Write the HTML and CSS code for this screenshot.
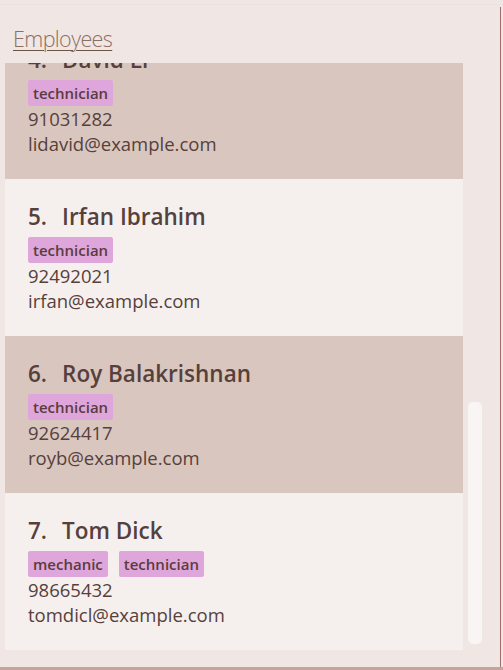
FILE: index.html
```html
<!DOCTYPE html>
<html>
<head>
<meta charset="utf-8">
<link rel="stylesheet" href="styles.css">
</head>
<body>
<div class="window">
  <div class="topstrip"></div>
  <div class="panel">
    <h1 class="title">Employees</h1>
    <div class="listarea">
      <div class="viewport">
        <ul class="list">
          <li class="card alt">
            <div class="name"><span class="num">4.</span><span>David Li</span></div>
            <div class="tags"><span class="tag">technician</span></div>
            <div class="line">91031282</div>
            <div class="line">lidavid@example.com</div>
          </li>
          <li class="card">
            <div class="name"><span class="num">5.</span><span>Irfan Ibrahim</span></div>
            <div class="tags"><span class="tag">technician</span></div>
            <div class="line">92492021</div>
            <div class="line">irfan@example.com</div>
          </li>
          <li class="card alt">
            <div class="name"><span class="num">6.</span><span>Roy Balakrishnan</span></div>
            <div class="tags"><span class="tag">technician</span></div>
            <div class="line">92624417</div>
            <div class="line">royb@example.com</div>
          </li>
          <li class="card">
            <div class="name"><span class="num">7.</span><span>Tom Dick</span></div>
            <div class="tags"><span class="tag">mechanic</span><span class="tag">technician</span></div>
            <div class="line">98665432</div>
            <div class="line">tomdicl@example.com</div>
          </li>
        </ul>
      </div>
      <div class="track"><div class="thumb"></div></div>
    </div>
  </div>
</div>
</body>
</html>
```

FILE: styles.css
```css
* { box-sizing: border-box; }
html, body { margin: 0; padding: 0; }
body {
  width: 503px;
  height: 670px;
  background: #f0e6e4;
  font-family: "Open Sans", "Noto Sans", sans-serif;
  color: #57403c;
  overflow: hidden;
}
.window {
  width: 503px;
  height: 670px;
  display: flex;
  flex-direction: column;
  border-bottom: 3px solid #c8a39d;
}
.topstrip {
  height: 5px;
  background: #efe7e5;
  border-bottom: 1px solid #ece2e0;
}
.panel {
  flex: 1;
  display: flex;
  flex-direction: column;
  margin-right: 2px;
  margin-top: 2px;
  border-right: 1px solid #9c6f6a;
  padding-bottom: 14px;
}
.title {
  margin: 0;
  padding: 17px 0 0 13px;
  height: 56px;
  font-weight: 300;
  font-size: 21.5px;
  line-height: 30px;
  letter-spacing: -0.6px;
  color: #8c6f63;
  text-decoration: underline;
  text-decoration-color: #6d5445;
  text-decoration-thickness: 1px;
  text-underline-offset: 3px;
}
.listarea {
  flex: 1;
  display: flex;
  padding-left: 5px;
}
.viewport {
  width: 458px;
  height: 588px;
  overflow: hidden;
}
.list {
  list-style: none;
  margin: -41px 0 0 0;
  padding: 0;
}
.card {
  height: 157px;
  padding: 23px 0 0 23px;
  background: #f5f0ee;
}
.card.alt { background: #d9c7bf; }
.name {
  display: flex;
  gap: 15px;
  font-weight: 600;
  font-size: 22.5px;
  line-height: 30px;
}
.tags {
  display: flex;
  gap: 11px;
  margin-top: 5px;
}
.tag {
  display: inline-block;
  height: 26px;
  padding: 0 5px;
  background: #dea6db;
  border-radius: 2px;
  font-weight: 600;
  font-size: 15px;
  line-height: 26px;
  color: #5a3c3c;
}
.line {
  font-size: 18.5px;
  line-height: 25px;
}
.track {
  width: 14px;
  margin-left: 5px;
  padding-top: 339px;
}
.thumb {
  height: 242px;
  background: #f8f5f4;
  border-radius: 5px;
}
```
